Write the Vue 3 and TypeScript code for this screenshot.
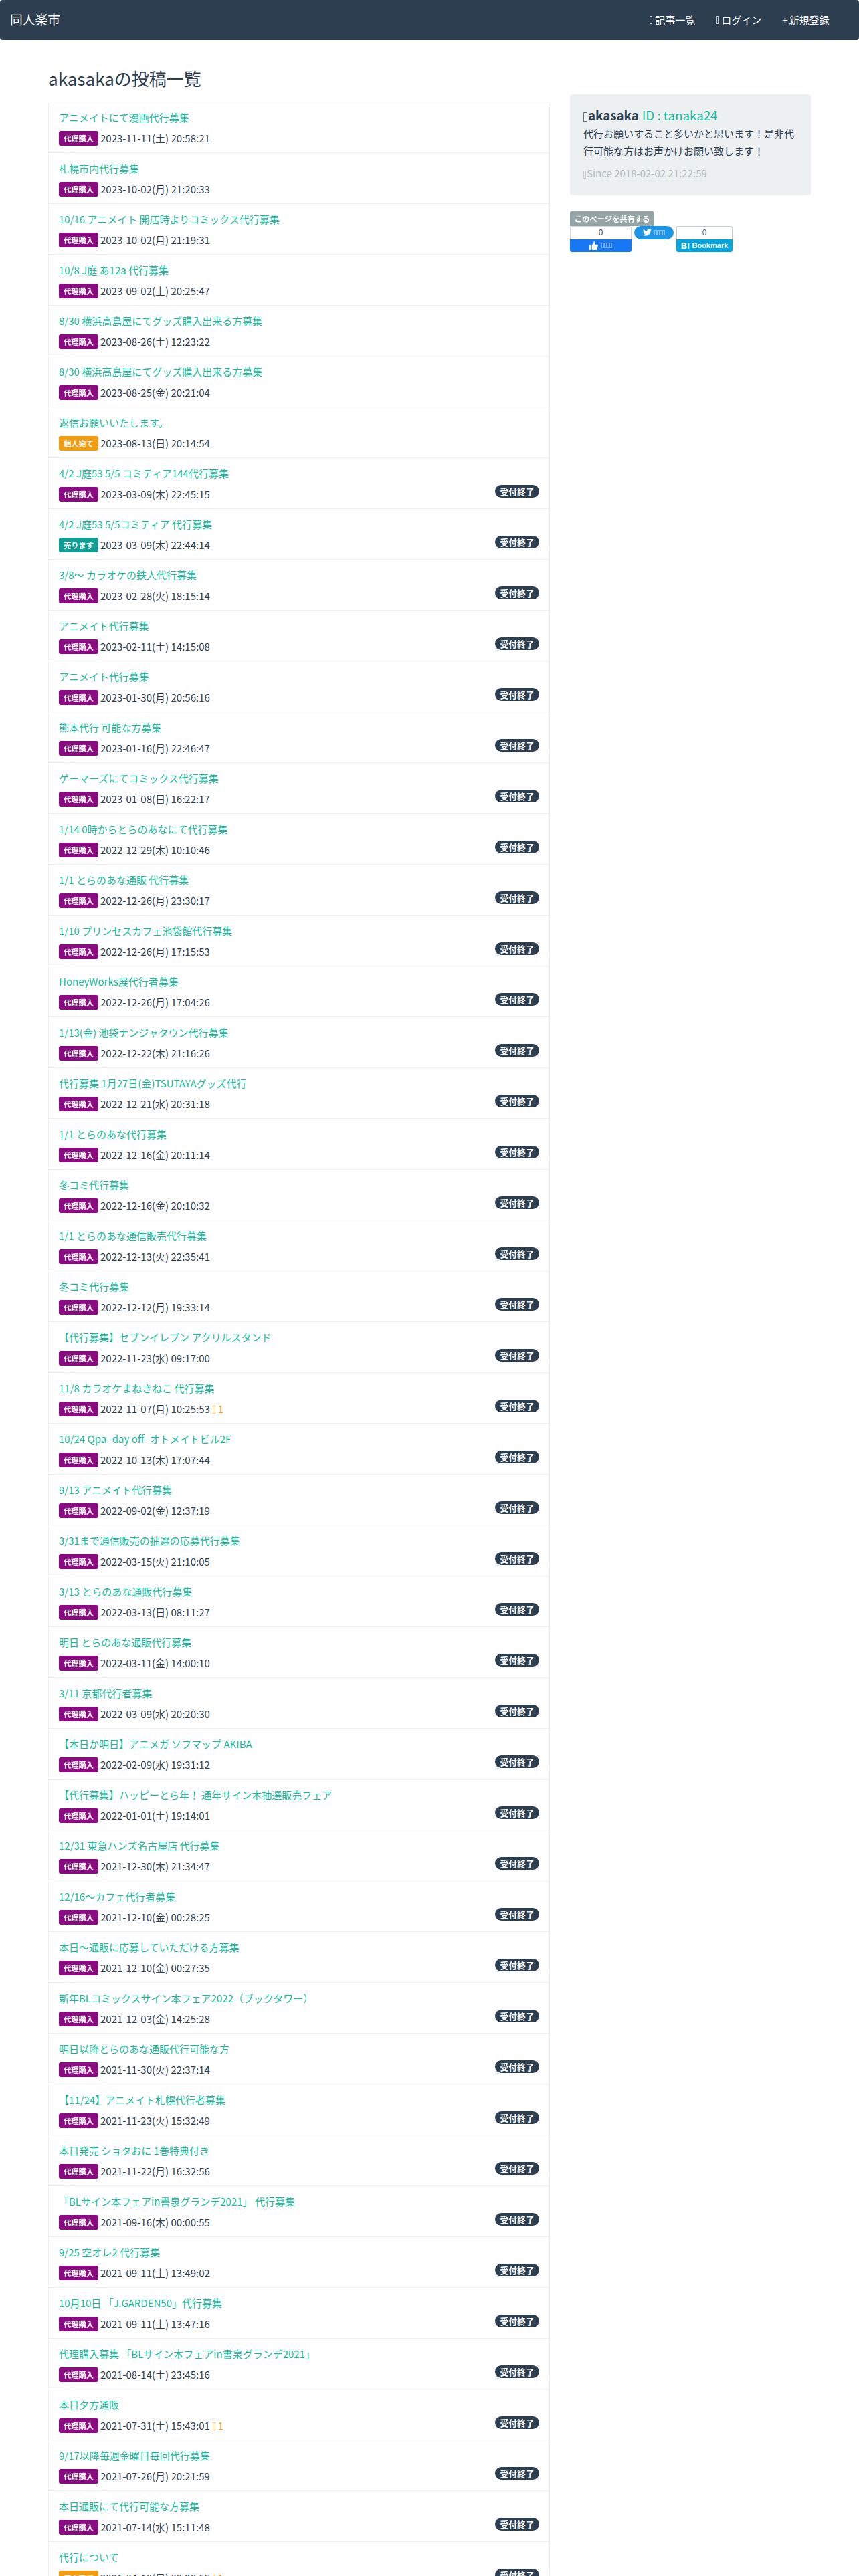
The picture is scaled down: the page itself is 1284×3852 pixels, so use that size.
<script setup lang="ts">
type Kind = "buy" | "personal" | "sell";

interface Post {
  title: string;
  date: string;
  kind?: Kind;
  closed?: boolean;
  comments?: number;
}

const kindLabels: Record<Kind, string> = {
  buy: "代理購入",
  personal: "個人宛て",
  sell: "売ります",
};

const posts: Post[] = [
  { title: "アニメイトにて漫画代行募集", date: "2023-11-11(土) 20:58:21" },
  { title: "札幌市内代行募集", date: "2023-10-02(月) 21:20:33" },
  { title: "10/16 アニメイト 開店時よりコミックス代行募集", date: "2023-10-02(月) 21:19:31" },
  { title: "10/8 J庭 あ12a 代行募集", date: "2023-09-02(土) 20:25:47" },
  { title: "8/30 横浜高島屋にてグッズ購入出来る方募集", date: "2023-08-26(土) 12:23:22" },
  { title: "8/30 横浜高島屋にてグッズ購入出来る方募集", date: "2023-08-25(金) 20:21:04" },
  { title: "返信お願いいたします。", date: "2023-08-13(日) 20:14:54", kind: "personal" },
  { title: "4/2 J庭53 5/5 コミティア144代行募集", date: "2023-03-09(木) 22:45:15", closed: true },
  { title: "4/2 J庭53 5/5コミティア 代行募集", date: "2023-03-09(木) 22:44:14", kind: "sell", closed: true },
  { title: "3/8～ カラオケの鉄人代行募集", date: "2023-02-28(火) 18:15:14", closed: true },
  { title: "アニメイト代行募集", date: "2023-02-11(土) 14:15:08", closed: true },
  { title: "アニメイト代行募集", date: "2023-01-30(月) 20:56:16", closed: true },
  { title: "熊本代行 可能な方募集", date: "2023-01-16(月) 22:46:47", closed: true },
  { title: "ゲーマーズにてコミックス代行募集", date: "2023-01-08(日) 16:22:17", closed: true },
  { title: "1/14 0時からとらのあなにて代行募集", date: "2022-12-29(木) 10:10:46", closed: true },
  { title: "1/1 とらのあな通販 代行募集", date: "2022-12-26(月) 23:30:17", closed: true },
  { title: "1/10 プリンセスカフェ池袋館代行募集", date: "2022-12-26(月) 17:15:53", closed: true },
  { title: "HoneyWorks展代行者募集", date: "2022-12-26(月) 17:04:26", closed: true },
  { title: "1/13(金) 池袋ナンジャタウン代行募集", date: "2022-12-22(木) 21:16:26", closed: true },
  { title: "代行募集 1月27日(金)TSUTAYAグッズ代行", date: "2022-12-21(水) 20:31:18", closed: true },
  { title: "1/1 とらのあな代行募集", date: "2022-12-16(金) 20:11:14", closed: true },
  { title: "冬コミ代行募集", date: "2022-12-16(金) 20:10:32", closed: true },
  { title: "1/1 とらのあな通信販売代行募集", date: "2022-12-13(火) 22:35:41", closed: true },
  { title: "冬コミ代行募集", date: "2022-12-12(月) 19:33:14", closed: true },
  { title: "【代行募集】セブンイレブン アクリルスタンド", date: "2022-11-23(水) 09:17:00", closed: true },
  { title: "11/8 カラオケまねきねこ 代行募集", date: "2022-11-07(月) 10:25:53", closed: true, comments: 1 },
  { title: "10/24 Qpa -day off- オトメイトビル2F", date: "2022-10-13(木) 17:07:44", closed: true },
  { title: "9/13 アニメイト代行募集", date: "2022-09-02(金) 12:37:19", closed: true },
  { title: "3/31まで通信販売の抽選の応募代行募集", date: "2022-03-15(火) 21:10:05", closed: true },
  { title: "3/13 とらのあな通販代行募集", date: "2022-03-13(日) 08:11:27", closed: true },
  { title: "明日 とらのあな通販代行募集", date: "2022-03-11(金) 14:00:10", closed: true },
  { title: "3/11 京都代行者募集", date: "2022-03-09(水) 20:20:30", closed: true },
  { title: "【本日か明日】アニメガ ソフマップ AKIBA", date: "2022-02-09(水) 19:31:12", closed: true },
  { title: "【代行募集】ハッピーとら年！ 通年サイン本抽選販売フェア", date: "2022-01-01(土) 19:14:01", closed: true },
  { title: "12/31 東急ハンズ名古屋店 代行募集", date: "2021-12-30(木) 21:34:47", closed: true },
  { title: "12/16～カフェ代行者募集", date: "2021-12-10(金) 00:28:25", closed: true },
  { title: "本日～通販に応募していただける方募集", date: "2021-12-10(金) 00:27:35", closed: true },
  { title: "新年BLコミックスサイン本フェア2022（ブックタワー）", date: "2021-12-03(金) 14:25:28", closed: true },
  { title: "明日以降とらのあな通販代行可能な方", date: "2021-11-30(火) 22:37:14", closed: true },
  { title: "【11/24】アニメイト札幌代行者募集", date: "2021-11-23(火) 15:32:49", closed: true },
  { title: "本日発売 ショタおに 1巻特典付き", date: "2021-11-22(月) 16:32:56", closed: true },
  { title: "「BLサイン本フェアin書泉グランデ2021」 代行募集", date: "2021-09-16(木) 00:00:55", closed: true },
  { title: "9/25 空オレ2 代行募集", date: "2021-09-11(土) 13:49:02", closed: true },
  { title: "10月10日 「J.GARDEN50」代行募集", date: "2021-09-11(土) 13:47:16", closed: true },
  { title: "代理購入募集 「BLサイン本フェアin書泉グランデ2021」", date: "2021-08-14(土) 23:45:16", closed: true },
  { title: "本日夕方通販", date: "2021-07-31(土) 15:43:01", closed: true, comments: 1 },
  { title: "9/17以降毎週金曜日毎回代行募集", date: "2021-07-26(月) 20:21:59", closed: true },
  { title: "本日通販にて代行可能な方募集", date: "2021-07-14(水) 15:11:48", closed: true },
  { title: "代行について", date: "2021-04-18(日) 09:38:55", kind: "personal", closed: true, comments: 1 },
];
</script>

<template>
  <div class="page">
    <nav class="navbar">
      <a class="brand">同人楽市</a>
      <div class="nav-links">
        <a class="nav-link"><i class="tofu"></i>記事一覧</a>
        <a class="nav-link"><i class="tofu"></i>ログイン</a>
        <a class="nav-link"><span class="plus">+</span>新規登録</a>
      </div>
    </nav>

    <div class="container">
      <main class="main-col">
        <h2 class="heading">akasakaの投稿一覧</h2>
        <ul class="post-list">
          <li v-for="(post, i) in posts" :key="i" class="post">
            <a class="post-title">{{ post.title }}</a>
            <div class="post-meta">
              <div class="post-info">
                <span class="badge" :class="post.kind ?? 'buy'">{{ kindLabels[post.kind ?? "buy"] }}</span>
                <span class="post-date">{{ post.date }}</span>
                <span v-if="post.comments" class="comments"><i class="tofu"></i>{{ post.comments }}</span>
              </div>
              <span v-if="post.closed" class="closed">受付終了</span>
            </div>
          </li>
        </ul>
      </main>

      <aside class="side-col">
        <section class="profile">
          <div class="profile-name">
            <i class="tofu big"></i><strong>akasaka</strong>
            <a class="profile-id">ID : tanaka24</a>
          </div>
          <p class="profile-text">代行お願いすること多いかと思います！是非代行可能な方はお声かけお願い致します！</p>
          <p class="profile-since"><i class="tofu tight"></i>Since 2018-02-02 21:22:59</p>
        </section>

        <section class="share">
          <span class="share-label">このページを共有する</span>
          <div class="share-buttons">
            <div class="counter facebook">
              <div class="count">0</div>
              <div class="counter-action">
                <svg class="thumb" viewBox="0 0 14 14" width="13" height="13">
                  <path fill="#fff" d="M0 6h3v8H0zM4 6.2 6.6 2.6C7 1.4 7 .6 7.4 0c1.3 0 2 1 1.8 2.3L8.700 5H12.800c1 0 1.400 1 1 1.800l-1.600 6.100c-.2.700-.7 1.100-1.400 1.100H6.200C5 14 4 13.600 4 13z" />
                </svg>
                <span class="tofu-row"><i class="tofu small"></i><i class="tofu small"></i><i class="tofu small"></i><i class="tofu small"></i></span>
              </div>
            </div>

            <div class="tweet">
              <svg viewBox="0 0 24 24" width="13" height="13">
                <path fill="#fff" d="M23.900 4.600c-.9.400-1.800.7-2.800.8 1-.6 1.800-1.600 2.200-2.700-1 .6-2 1-3.100 1.200A4.920 4.920 0 0 0 11.800 8.400C7.700 8.200 4.100 6.200 1.700 3.200c-1.300 2.200-.6 5.100 1.500 6.500-.8 0-1.600-.2-2.200-.6 0 2.300 1.600 4.400 3.900 4.900-.7.200-1.500.2-2.200.1.600 2 2.400 3.400 4.600 3.400A9.900 9.900 0 0 1 0 19.500 14 14 0 0 0 7.500 21.700c9.100 0 14.300-7.700 14-14.600 1-.7 1.800-1.500 2.400-2.500z" />
              </svg>
              <span class="tofu-row"><i class="tofu small"></i><i class="tofu small"></i><i class="tofu small"></i><i class="tofu small"></i></span>
            </div>

            <div class="counter hatena">
              <div class="count">0</div>
              <div class="counter-action"><b class="hatena-b">B!</b> Bookmark</div>
            </div>
          </div>
        </section>
      </aside>
    </div>
  </div>
</template>

<style>
html,
body {
  margin: 0;
  background: #fff;
}
</style>

<style scoped>
.page {
  font-family: "Noto Sans CJK JP", "Noto Sans", sans-serif;
  font-size: 15px;
  line-height: 1.5;
  color: #2c3e50;
  height: 3852px;
  overflow: hidden;
}

/* Navbar */
.navbar {
  display: flex;
  justify-content: space-between;
  align-items: center;
  height: 60px;
  padding: 0 29px 0 15px;
  background: #2c3e50;
  border-radius: 4px;
  color: #fff;
}

.brand {
  font-size: 18.75px;
  margin-top: -2px;
}

.nav-links {
  display: flex;
}

.nav-link {
  display: flex;
  align-items: center;
  padding: 0 15.5px;
}

.plus {
  margin-right: 2px;
}

/* Missing icon glyphs */
.tofu {
  display: inline-block;
  box-sizing: border-box;
  width: 4px;
  height: 12px;
  margin-right: 4px;
  border: 1px solid currentColor;
  opacity: 0.7;
  vertical-align: -1px;
}

.tofu.big {
  width: 6px;
  height: 14px;
  margin-right: 1px;
  vertical-align: -2px;
}

.tofu.tight {
  margin-right: 1px;
  vertical-align: -2px;
}

.tofu.small {
  width: 3.5px;
  height: 8px;
  margin: 0 0.25px;
  vertical-align: 0;
}

/* Layout */
.container {
  display: grid;
  grid-template-columns: 750px 360px;
  gap: 30px;
  width: 1140px;
  margin: 0 auto;
}

.heading {
  margin: 0;
  padding-top: 37px;
  height: 55px;
  font-size: 26px;
  font-weight: 400;
  line-height: 1.5;
}

/* Posts */
.post-list {
  list-style: none;
  margin: 0;
  padding: 0;
  border: 1px solid #ecf0f1;
  border-radius: 4px;
}

.post {
  box-sizing: border-box;
  height: 76px;
  padding: 12px 15px 0;
  border-bottom: 1px solid #ecf0f1;
}

.post-title {
  display: block;
  color: #18bc9c;
  height: 31px;
}

.post-meta {
  display: flex;
  justify-content: space-between;
}

.post-info {
  display: flex;
  align-items: center;
  height: 22px;
}

.badge {
  box-sizing: border-box;
  height: 22px;
  width: 59px;
  margin-right: 3px;
  border-radius: 3px;
  color: #fff;
  font-size: 11.25px;
  font-weight: 700;
  line-height: 22px;
  text-align: center;
}

.badge.buy {
  background: #8a0a82;
}

.badge.personal {
  background: #f39c12;
}

.badge.sell {
  background: #0f9d94;
}

.comments {
  margin-left: 4px;
  color: #f39c12;
}

.closed {
  box-sizing: border-box;
  height: 19px;
  width: 66px;
  margin-top: -3px;
  border-radius: 10px;
  background: #2c3e50;
  color: #fff;
  font-size: 12.75px;
  font-weight: 700;
  line-height: 19px;
  text-align: center;
}

/* Sidebar */
.side-col {
  padding-top: 81px;
}

.profile {
  box-sizing: border-box;
  height: 151px;
  padding: 17px 20px;
  background: #ecf0f1;
  border-radius: 4px;
}

.profile-name {
  font-size: 18.75px;
  line-height: 28px;
}

.profile-name strong {
  margin-right: 5px;
}

.profile-id {
  color: #18bc9c;
}

.profile-text {
  margin: 1px 0 0;
  line-height: 25.5px;
}

.profile-since {
  margin: 10px 0 0;
  color: #b4bcc2;
}

.share {
  margin-top: 24px;
}

.share-label {
  display: block;
  width: 126px;
  height: 21.5px;
  border-radius: 3px 3px 0 0;
  background: #95a5a6;
  color: #fff;
  font-size: 11.25px;
  font-weight: 700;
  line-height: 22px;
  text-align: center;
}

.share-buttons {
  display: flex;
  align-items: flex-start;
  gap: 4px;
}

.counter {
  box-sizing: border-box;
  border-radius: 3px;
  overflow: hidden;
  font-family: "Liberation Sans", Arial, sans-serif;
}

.count {
  box-sizing: border-box;
  height: 20px;
  border: 1px solid;
  border-bottom: 0;
  border-radius: 3px 3px 0 0;
  font-size: 12px;
  line-height: 19px;
  text-align: center;
}

.counter-action {
  display: flex;
  align-items: center;
  justify-content: center;
  height: 19.5px;
  color: #fff;
}

.facebook {
  width: 92px;
}

.facebook .count {
  border-color: #d3d6db;
  color: #444;
}

.facebook .counter-action {
  background: #1877f2;
  gap: 5px;
  color: #9cc4f8;
}

.tweet {
  display: flex;
  align-items: center;
  justify-content: center;
  gap: 4px;
  width: 59px;
  height: 20px;
  border-radius: 10px;
  background: #1f95e8;
  color: #a9d7f7;
}

.hatena {
  width: 84px;
}

.hatena .count {
  border-color: #bfcbd9;
  color: #56687a;
}

.hatena .counter-action {
  background: #00a4de;
  font-size: 11px;
  font-weight: 700;
  white-space: pre;
}

.hatena-b {
  font-size: 13px;
}

.tofu-row {
  display: inline-flex;
  align-items: center;
}
</style>
